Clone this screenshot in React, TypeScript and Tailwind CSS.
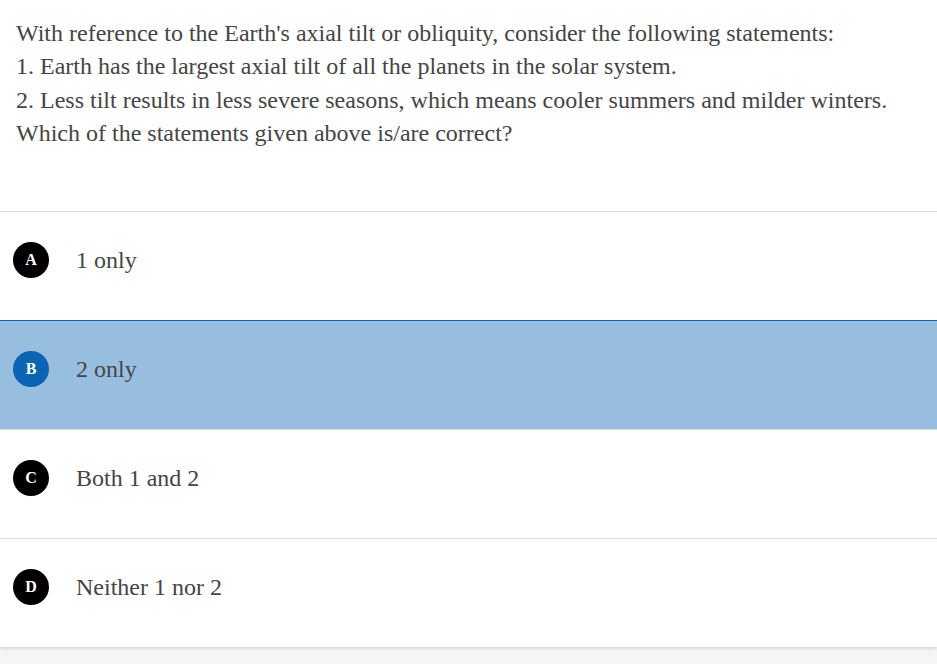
const options = [
  { key: 'A', text: '1 only' },
  { key: 'B', text: '2 only' },
  { key: 'C', text: 'Both 1 and 2' },
  { key: 'D', text: 'Neither 1 nor 2' },
];

export default function App() {
  const selected = 'B';

  return (
    <main className="min-h-[664px] bg-[#f5f5f5] font-['Liberation_Serif','Times_New_Roman',serif] text-[#454545]">
      <div className="bg-white shadow-[0_1px_4px_rgba(0,0,0,0.18)]">
        <div className="h-[211px] px-4 pt-[17px] text-[24px] leading-[33.4px]">
          <p>With reference to the Earth's axial tilt or obliquity, consider the following statements:</p>
          <p>1. Earth has the largest axial tilt of all the planets in the solar system.</p>
          <p>2. Less tilt results in less severe seasons, which means cooler summers and milder winters.</p>
          <p>Which of the statements given above is/are correct?</p>
        </div>
        {options.map((o) => {
          const active = o.key === selected;
          return (
            <div
              key={o.key}
              className={
                active
                  ? 'flex h-[109px] items-start gap-[27px] border-t border-[#0b63b3] bg-[#98bedf] pl-[13px] pt-[30px]'
                  : 'flex h-[109px] items-start gap-[27px] border-t border-[#dcdcdc] pl-[13px] pt-[30px]'
              }
            >
              <div
                className={
                  active
                    ? 'flex h-9 w-9 shrink-0 items-center justify-center rounded-full bg-[#0b63b3] text-[16px] font-bold text-white'
                    : 'flex h-9 w-9 shrink-0 items-center justify-center rounded-full bg-black text-[16px] font-bold text-white'
                }
              >
                {o.key}
              </div>
              <span className="text-[24px] leading-9">{o.text}</span>
            </div>
          );
        })}
      </div>
    </main>
  );
}
